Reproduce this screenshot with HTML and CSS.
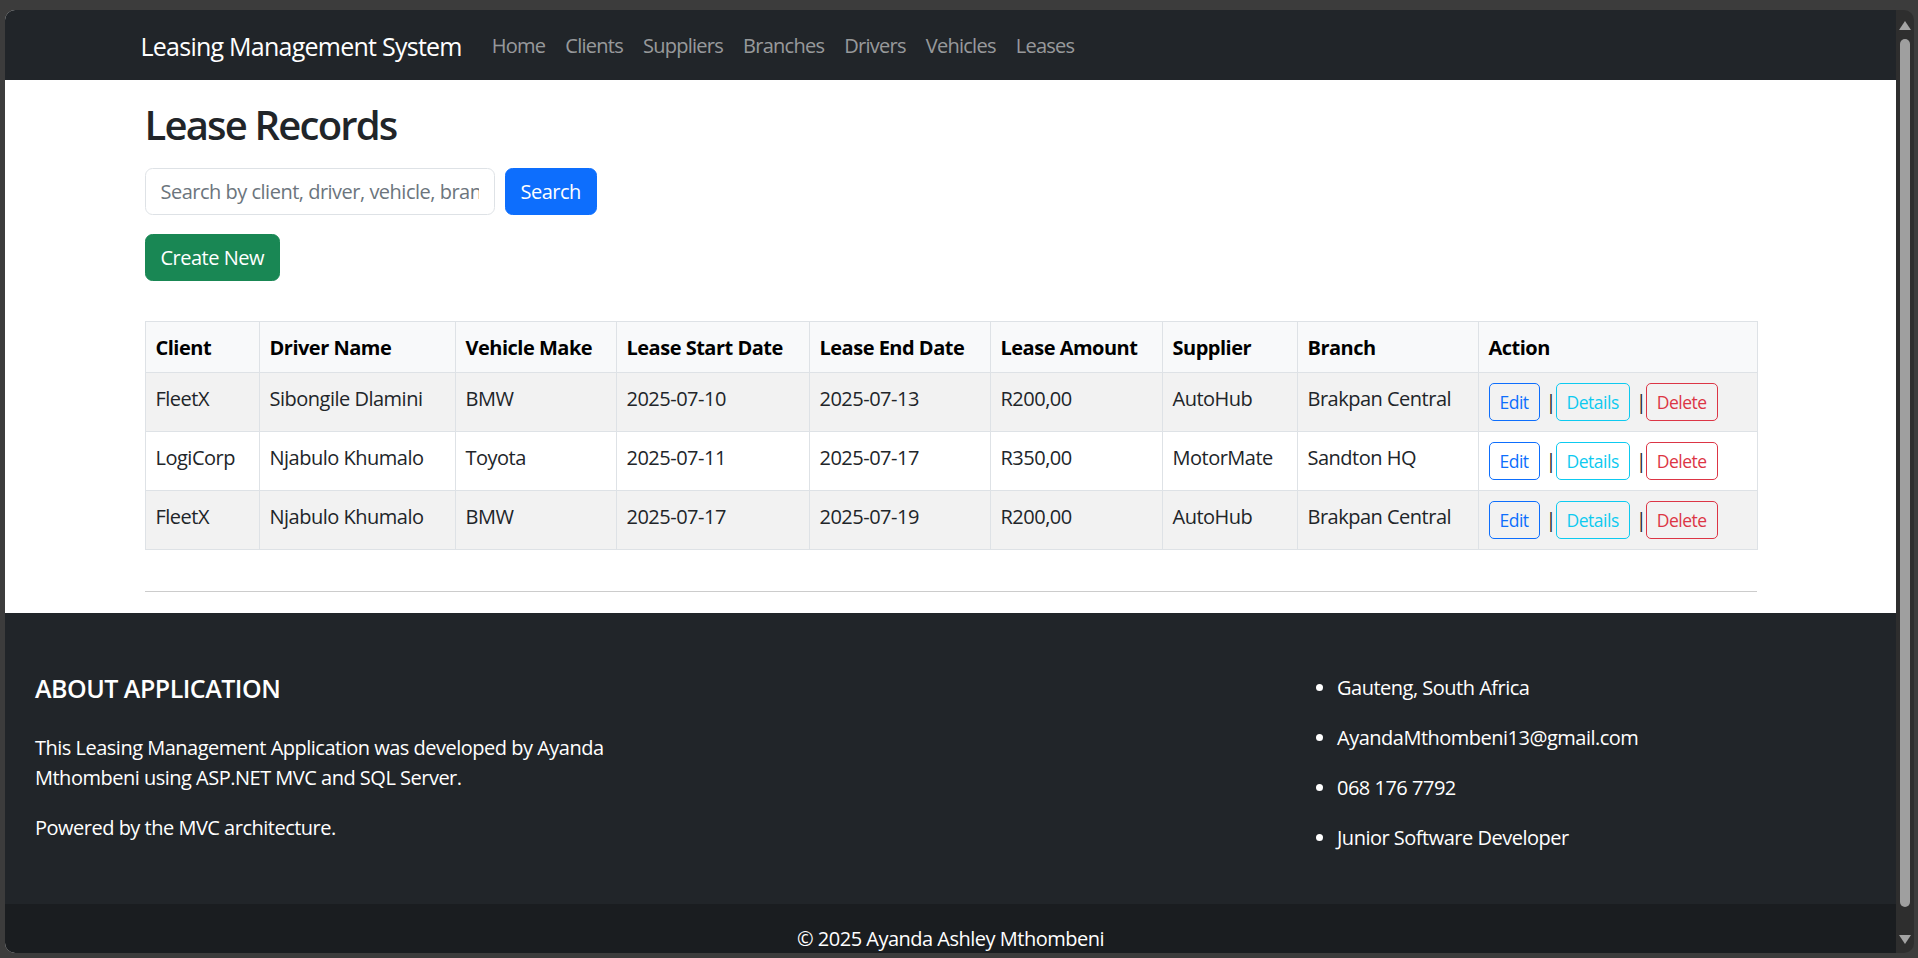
FILE: index.html
```html
<!DOCTYPE html>
<html lang="en">
<head>
<meta charset="utf-8">
<title>Lease Records - Leasing Management System</title>
<link rel="stylesheet" href="styles.css">
</head>
<body>
<div class="frame">
  <div class="viewport">
    <header class="navbar">
      <div class="container nav-inner">
        <a class="brand" href="#">Leasing Management System</a>
        <ul class="nav-links">
          <li><a href="#">Home</a></li>
          <li><a href="#">Clients</a></li>
          <li><a href="#">Suppliers</a></li>
          <li><a href="#">Branches</a></li>
          <li><a href="#">Drivers</a></li>
          <li><a href="#">Vehicles</a></li>
          <li><a href="#">Leases</a></li>
        </ul>
      </div>
    </header>

    <main class="container main">
      <h2 class="page-title">Lease Records</h2>
      <form class="search-form">
        <input class="form-control" type="text" placeholder="Search by client, driver, vehicle, branch...">
        <button class="btn btn-primary" type="button">Search</button>
      </form>
      <div class="create-bar">
        <a class="btn btn-success" href="#">Create New</a>
      </div>

      <table class="table">
        <colgroup>
          <col class="c-client">
          <col class="c-driver">
          <col class="c-make">
          <col class="c-start">
          <col class="c-end">
          <col class="c-amount">
          <col class="c-supplier">
          <col class="c-branch">
          <col class="c-action">
        </colgroup>
        <thead>
          <tr>
            <th>Client</th>
            <th>Driver Name</th>
            <th>Vehicle Make</th>
            <th>Lease Start Date</th>
            <th>Lease End Date</th>
            <th>Lease Amount</th>
            <th>Supplier</th>
            <th>Branch</th>
            <th>Action</th>
          </tr>
        </thead>
        <tbody>
          <tr>
            <td>FleetX</td>
            <td>Sibongile Dlamini</td>
            <td>BMW</td>
            <td>2025-07-10</td>
            <td>2025-07-13</td>
            <td>R200,00</td>
            <td>AutoHub</td>
            <td>Brakpan Central</td>
            <td>
              <div class="act">
                <a class="btn-sm btn-edit" href="#">Edit</a><span class="sep">|</span><a class="btn-sm btn-details" href="#">Details</a><span class="sep">|</span><a class="btn-sm btn-delete" href="#">Delete</a>
              </div>
            </td>
          </tr>
          <tr>
            <td>LogiCorp</td>
            <td>Njabulo Khumalo</td>
            <td>Toyota</td>
            <td>2025-07-11</td>
            <td>2025-07-17</td>
            <td>R350,00</td>
            <td>MotorMate</td>
            <td>Sandton HQ</td>
            <td>
              <div class="act">
                <a class="btn-sm btn-edit" href="#">Edit</a><span class="sep">|</span><a class="btn-sm btn-details" href="#">Details</a><span class="sep">|</span><a class="btn-sm btn-delete" href="#">Delete</a>
              </div>
            </td>
          </tr>
          <tr>
            <td>FleetX</td>
            <td>Njabulo Khumalo</td>
            <td>BMW</td>
            <td>2025-07-17</td>
            <td>2025-07-19</td>
            <td>R200,00</td>
            <td>AutoHub</td>
            <td>Brakpan Central</td>
            <td>
              <div class="act">
                <a class="btn-sm btn-edit" href="#">Edit</a><span class="sep">|</span><a class="btn-sm btn-details" href="#">Details</a><span class="sep">|</span><a class="btn-sm btn-delete" href="#">Delete</a>
              </div>
            </td>
          </tr>
        </tbody>
      </table>
      <hr class="divider">
    </main>

    <footer class="footer">
      <div class="footer-main">
        <div class="about">
          <h5 class="footer-title">About Application</h5>
          <p>This Leasing Management Application was developed by Ayanda Mthombeni using ASP.NET MVC and SQL Server.</p>
          <p>Powered by the MVC architecture.</p>
        </div>
        <div class="spacer"></div>
        <ul class="contact">
          <li>Gauteng, South Africa</li>
          <li>AyandaMthombeni13@gmail.com</li>
          <li>068 176 7792</li>
          <li>Junior Software Developer</li>
        </ul>
      </div>
      <div class="footer-bottom">© 2025 Ayanda Ashley Mthombeni</div>
    </footer>
  </div>
  <div class="scrollbar">
    <span class="sb-up"></span>
    <span class="sb-thumb"></span>
    <span class="sb-down"></span>
  </div>
</div>
</body>
</html>
```

FILE: styles.css
```css
* { box-sizing: border-box; }

html, body {
  margin: 0;
  height: 100%;
}

body {
  background: #3c3c3c;
  font-family: "Open Sans", "Noto Sans", sans-serif;
  font-size: 20px;
  line-height: 30px;
  color: #212529;
  letter-spacing: -0.025em;
  overflow: hidden;
}

/* browser window frame */
.frame {
  display: flex;
  height: 943px;
  margin: 10px 4px 0 5px;
  border-radius: 10px;
  overflow: hidden;
  background: #2e2e2e;
}

.viewport {
  flex: 0 0 1891px;
  height: 100%;
  overflow: hidden;
  background: #fff;
}

.scrollbar {
  flex: 1;
  display: flex;
  flex-direction: column;
  align-items: center;
  padding-top: 11px;
}

.sb-up {
  width: 0;
  height: 0;
  border-left: 6px solid transparent;
  border-right: 6px solid transparent;
  border-bottom: 9px solid #a3a3a3;
}

.sb-thumb {
  width: 10px;
  height: 868px;
  margin-top: 9px;
  border-radius: 5px;
  background: #9f9f9f;
}

.sb-down {
  width: 0;
  height: 0;
  margin-top: 28px;
  border-left: 6px solid transparent;
  border-right: 6px solid transparent;
  border-top: 9px solid #a3a3a3;
}

/* layout */
.container {
  width: 1612px;
  margin: 0 auto;
}

/* navbar */
.navbar {
  background: #212529;
  height: 70px;
}

.nav-inner {
  display: flex;
  align-items: center;
  height: 100%;
  padding-top: 2px;
}

.brand {
  font-size: 25px;
  line-height: 38px;
  color: #fff;
  text-decoration: none;
  letter-spacing: -0.03em;
  margin-left: -4px;
  margin-right: 20px;
}

.nav-links {
  display: flex;
  list-style: none;
  margin: 0;
  padding: 0;
}

.nav-links a {
  display: block;
  padding: 0 10px;
  color: rgba(255, 255, 255, 0.55);
  text-decoration: none;
  letter-spacing: -0.037em;
}

/* main */
.main {
  padding-top: 20px;
}

.page-title {
  margin: 0 0 20px;
  padding-top: 1px;
  height: 48px;
  font-size: 40px;
  line-height: 48px;
  font-weight: 600;
  letter-spacing: -0.045em;
  color: #212529;
}

.search-form {
  display: flex;
  gap: 10px;
  margin: 0 0 19px;
}

.form-control {
  width: 350px;
  height: 47px;
  border: 1px solid #dee2e6;
  border-radius: 7.5px;
  padding: 0 15px;
  font: inherit;
  letter-spacing: inherit;
  color: #212529;
  background: #fff;
}

.form-control::placeholder {
  color: #6c757d;
}

.btn {
  display: inline-flex;
  align-items: center;
  height: 47px;
  padding: 0 15px;
  border: 1px solid transparent;
  border-radius: 7.5px;
  font: inherit;
  letter-spacing: inherit;
  color: #fff;
  text-decoration: none;
  cursor: pointer;
}

.btn-primary { background: #0d6efd; border-color: #0d6efd; }
.btn-success { background: #198754; border-color: #198754; }

.create-bar {
  margin-bottom: 40px;
}

/* table */
.table {
  width: 100%;
  border-collapse: collapse;
  table-layout: fixed;
  margin-bottom: 0;
}

.c-client { width: 114px; }
.c-driver { width: 196px; }
.c-make { width: 161px; }
.c-start { width: 193px; }
.c-end { width: 181px; }
.c-amount { width: 172px; }
.c-supplier { width: 135px; }
.c-branch { width: 181px; }
.c-action { width: 279px; }

.table th,
.table td {
  border: 1px solid #dee2e6;
  padding: 11px 10px 9px;
  text-align: left;
  vertical-align: top;
  white-space: nowrap;
}

.table td:last-child {
  padding-top: 10px;
  padding-bottom: 10px;
}

.table thead th {
  background: #f8f9fa;
  color: #000;
  font-weight: 700;
}

.table tbody tr:nth-child(odd) td {
  background: #f2f2f2;
}

.act {
  display: flex;
  align-items: center;
  gap: 6px;
}

.sep {
  color: #212529;
  width: 4px;
  text-align: center;
}

.btn-sm {
  display: inline-flex;
  align-items: center;
  height: 38px;
  padding: 0 10px;
  border: 1px solid;
  border-radius: 5px;
  font-size: 17.5px;
  text-decoration: none;
  background: transparent;
}

.btn-edit { color: #0d6efd; border-color: #0d6efd; }
.btn-details { color: #0dcaf0; border-color: #0dcaf0; }
.btn-delete { color: #dc3545; border-color: #dc3545; }

.divider {
  margin: 41px 0 21px;
  border: 0;
  border-top: 1px solid #000;
  opacity: 0.2;
}

/* footer */
.footer {
  color: #fff;
}

.footer-main {
  background: #212529;
  padding: 60px 30px 31px;
  display: grid;
  grid-template-columns: 590px 1fr 569px;
}

.footer-title {
  font-size: 25px;
  line-height: 30px;
  font-weight: 600;
  margin: 0 0 30px;
  text-transform: uppercase;
}

.about p {
  margin: 0 0 20px;
}

.contact {
  margin: 0;
  padding-left: 40px;
}

.contact li {
  margin-bottom: 20px;
}

.footer-bottom {
  background: #1a1d20;
  text-align: center;
  padding: 20px;
}
```
